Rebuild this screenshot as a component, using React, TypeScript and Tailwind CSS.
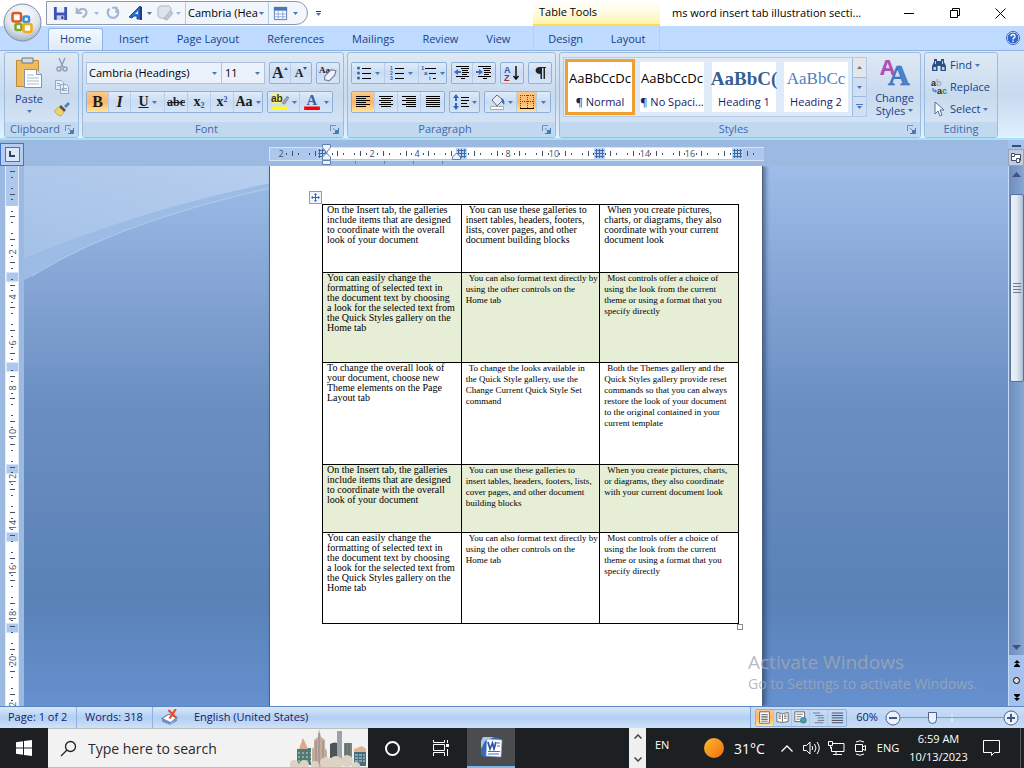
import { useState, type ReactNode } from 'react'

const tabs = ['Home', 'Insert', 'Page Layout', 'References', 'Mailings', 'Review', 'View']
const contextTabs = ['Design', 'Layout']

type Cell = string[]

interface DocRow {
  height: string
  shaded: boolean
  cells: [Cell, Cell, Cell]
}

const insertTab: Cell = ['On the Insert tab, the galleries', 'include items that are designed', 'to coordinate with the overall', 'look of your document']
const quickStyles: Cell = ['You can easily change the', 'formatting of selected text in', 'the document text by choosing', 'a look for the selected text from', 'the Quick Styles gallery on the', 'Home tab']
const formatDirect: Cell = ['You can also format text directly by', 'using the other controls on the', 'Home tab']
const mostControls: Cell = ['Most controls offer a choice of', 'using the look from the current', 'theme or using a format that you', 'specify directly']

const rows: DocRow[] = [
  {
    height: 'h-[68px]',
    shaded: false,
    cells: [
      insertTab,
      ['You can use these galleries to', 'insert tables, headers, footers,', 'lists, cover pages, and other', 'document building blocks'],
      ['When you create pictures,', 'charts, or diagrams, they also', 'coordinate with your current', 'document look'],
    ],
  },
  { height: 'h-[90px]', shaded: true, cells: [quickStyles, formatDirect, mostControls] },
  {
    height: 'h-[102px]',
    shaded: false,
    cells: [
      ['To change the overall look of', 'your document, choose new', 'Theme elements on the Page', 'Layout tab'],
      ['To change the looks available in', 'the Quick Style gallery, use the', 'Change Current Quick Style Set', 'command'],
      ['Both the Themes gallery and the', 'Quick Styles gallery provide reset', 'commands so that you can always', 'restore the look of your document', 'to the original contained in your', 'current template'],
    ],
  },
  {
    height: 'h-[68px]',
    shaded: true,
    cells: [
      insertTab,
      ['You can use these galleries to', 'insert tables, headers, footers, lists,', 'cover pages, and other document', 'building blocks'],
      ['When you create pictures, charts,', 'or diagrams, they also coordinate', 'with your current document look'],
    ],
  },
  { height: 'h-[91px]', shaded: false, cells: [quickStyles, formatDirect, mostControls] },
]

const Caret = ({ className = '' }: { className?: string }) => (
  <svg viewBox="0 0 5 3" className={`h-[3px] w-[5px] shrink-0 ${className}`} fill="#4a7ab5">
    <path d="M0 0h5L2.500 3z" />
  </svg>
)

function Icon({ size = 16, children }: { size?: number; children: ReactNode }) {
  return (
    <svg width={size} height={size} viewBox="0 0 16 16" fill="none" className="shrink-0">
      {children}
    </svg>
  )
}

// horizontal bars used by the list, alignment and spacing icons
const Lines = ({ bars, color = '#000' }: { bars: [number, number, number][]; color?: string }) => (
  <>
    {bars.map(([x, y, w]) => (
      <rect key={`${x}-${y}`} x={x} y={y} width={w} height="1" fill={color} />
    ))}
  </>
)

const alignBars: Record<string, [number, number, number][]> = {
  left: [[1, 2, 14], [1, 4, 10], [1, 6, 14], [1, 8, 10], [1, 10, 14], [1, 12, 10]],
  center: [[1, 2, 14], [3, 4, 10], [1, 6, 14], [3, 8, 10], [1, 10, 14], [3, 12, 10]],
  right: [[1, 2, 14], [5, 4, 10], [1, 6, 14], [5, 8, 10], [1, 10, 14], [5, 12, 10]],
  justify: [[1, 2, 14], [1, 4, 14], [1, 6, 14], [1, 8, 14], [1, 10, 14], [1, 12, 14]],
}

function Tool({ label, width = 'w-[23px]', active = false, caret = false, children }: { label: string; width?: string; active?: boolean; caret?: boolean; children: ReactNode }) {
  return (
    <button
      aria-label={label}
      className={`flex h-5 items-center justify-center gap-[3px] ${width} ${active ? 'bg-gradient-to-b from-[#fbc98c] via-[#fcb562] to-[#ffe59c]' : ''}`}
    >
      {children}
      {caret && <Caret />}
    </button>
  )
}

const ToolBox = ({ children }: { children: ReactNode }) => (
  <div className="flex h-[22px] divide-x divide-[#b7cde8] overflow-hidden rounded-[2px] border border-[#8fb0d8] bg-gradient-to-b from-[#dfebf9] via-[#c9dcf3] to-[#d6e6f8]">
    {children}
  </div>
)

function Group({ title, width, launcher = true, children }: { title: string; width: string; launcher?: boolean; children: ReactNode }) {
  return (
    <section className={`flex h-[86px] shrink-0 flex-col overflow-hidden rounded-[3px] border border-[#9bbbe0] bg-gradient-to-b from-[#dfe9f5] via-[#c9daee] to-[#d9e8f8] ${width}`}>
      <div className="flex-1">{children}</div>
      <div className="flex h-[15px] items-center bg-[#c1d8f1] text-[11px] text-[#3e6aaa]">
        <span className="flex-1 text-center">{title}</span>
        {launcher && (
          <button aria-label={`${title} options`} className="mr-1">
            <svg width="9" height="9" viewBox="0 0 9 9" fill="none" stroke="#6a8fc0">
              <path d="M.5 6V.5H6" />
              <path d="M3 3l3 3" />
              <path d="M8.500 3v5.500H3" stroke="#4e78b0" />
              <path d="M5 5h3v3H5z" fill="#4e78b0" stroke="none" />
            </svg>
          </button>
        )}
      </div>
    </section>
  )
}

function OfficeButton() {
  return (
    <button aria-label="Office Button" className="absolute left-[3px] top-[3px] z-10">
      <svg width="39" height="39" viewBox="0 0 39 39">
        <defs>
          <radialGradient id="orb" cx="50%" cy="30%" r="75%">
            <stop offset="0" stopColor="#ffffff" />
            <stop offset="0.600" stopColor="#dfe4ec" />
            <stop offset="1" stopColor="#9aa8bd" />
          </radialGradient>
        </defs>
        <circle cx="19.500" cy="19.500" r="18.500" fill="url(#orb)" stroke="#7d8ea8" />
        <g fill="#fff" strokeWidth="2.600">
          <rect x="9.500" y="10" width="8.500" height="8.500" rx="2" stroke="#e2571c" />
          <rect x="20.500" y="13.500" width="5.500" height="5.500" rx="1.500" stroke="#3b8fd8" />
          <rect x="12.500" y="21" width="6" height="6" rx="1.500" stroke="#79a928" />
          <rect x="20.500" y="21" width="8" height="8" rx="2" stroke="#f3ab1c" />
        </g>
      </svg>
    </button>
  )
}

function TitleBar() {
  return (
    <header className="flex h-[26px] shrink-0 items-center bg-white">
      <div className="ml-[46px] flex h-6 w-[262px] shrink-0 items-center rounded-r-full border border-[#8d99ab] bg-[#f3f6fa]">
        <button aria-label="Save" className="ml-[6px]">
          <Icon size={15}>
            <path d="M1 1h14v14H2l-1-1z" fill="#3f51b5" />
            <path d="M4 1h8v6H4z" fill="#e9efff" />
            <path d="M4 10h8v5H4z" fill="#c5cdf0" />
            <path d="M9 11h2v3H9z" fill="#26348c" />
          </Icon>
        </button>
        <button aria-label="Undo" className="ml-[7px] flex items-center gap-[5px]">
          <Icon size={14}>
            <path d="M2 2v6h6M3 7c4-6 11-4 10 1-.5 3-2.500 4-4.500 5" stroke="#a5b6d3" strokeWidth="2.500" />
          </Icon>
          <Caret className="opacity-50" />
        </button>
        <button aria-label="Repeat" className="ml-[7px]">
          <Icon size={14}>
            <path d="M4 3a6 6 0 1 0 8 0M12 8V2h-5" stroke="#a5b6d3" strokeWidth="2.500" />
          </Icon>
        </button>
        <button aria-label="WordArt" className="ml-2 flex items-center gap-[3px]">
          <Icon>
            <path d="M1 12L12 1v13h-3v-3H6l-2 2z" fill="#2c6fd0" stroke="#1b4a9c" />
            <path d="M7 9l3-3v3z" fill="#e6f0ff" />
            <path d="M12 1l2 1v13h-2z" fill="#173f85" />
          </Icon>
          <Caret />
        </button>
        <button aria-label="Change Shape" className="ml-[5px] flex items-center gap-[3px]">
          <Icon>
            <path d="M3 1h9l2 2v7l-3 3H3l-2-2V3z" fill="#dfe4ec" stroke="#aab5c6" />
            <path d="M7 14l6-8 3 2-6 7z" fill="#c3cad6" stroke="#aab5c6" />
          </Icon>
          <Caret className="opacity-50" />
        </button>
        <label className="ml-1 flex h-[22px] w-[84px] items-center border-x border-[#b4cae6] bg-[#f0f5fc] pr-1">
          <select aria-label="Quick font" className="min-w-0 flex-1 appearance-none overflow-hidden bg-transparent pl-[2px] text-[11px] text-black">
            <option>Cambria (Hea</option>
          </select>
          <Caret />
        </label>
        <button aria-label="Draw Table" className="ml-1 flex items-center gap-[5px]">
          <Icon size={15}>
            <path d="M1.500 1.500h13v13h-13z" fill="#fff" stroke="#4a76b8" />
            <path d="M1 1h14v4H1z" fill="#4a76b8" />
            <path d="M1 8.500h14M1 11.500h14M5.500 5v10M10.500 5v10" stroke="#8aa9d8" />
          </Icon>
          <Caret />
        </button>
      </div>
      <button aria-label="Customize Quick Access Toolbar" className="ml-2 flex flex-col gap-px">
        <span className="h-px w-[5px] bg-[#1d3f82]" />
        <Caret />
      </button>
      <div className="ml-[212px] flex h-full w-[127px] shrink-0 items-center border-b-2 border-[#fbe04b] bg-gradient-to-b from-white via-[#fffbe4] to-[#fff3a8] pl-[6px] text-[11px] text-black">
        Table Tools
      </div>
      <h1 className="min-w-0 flex-1 truncate pl-3 text-[11px] text-black">ms word insert tab illustration secti...</h1>
      <div className="flex h-full shrink-0 items-center text-black">
        <button aria-label="Minimize" className="flex w-[46px] justify-center">
          <svg width="10" height="10" stroke="#000"><path d="M0 5.500h10" /></svg>
        </button>
        <button aria-label="Restore" className="flex w-[45px] justify-center">
          <svg width="10" height="10" fill="none" stroke="#000"><path d="M.5 2.500h7v7h-7zM2.500 2.500v-2h7v7h-2" /></svg>
        </button>
        <button aria-label="Close" className="flex w-[47px] justify-center">
          <svg width="11" height="11" stroke="#000"><path d="M.5.5l10 10M10.500.5l-10 10" /></svg>
        </button>
      </div>
    </header>
  )
}

function TabBar({ active, onSelect }: { active: string; onSelect: (tab: string) => void }) {
  return (
    <nav className="flex h-6 shrink-0 items-end bg-[#bfdbff] pl-[48px] text-[11px] text-[#15428b]">
      {tabs.map(tab => (
        <button
          key={tab}
          onClick={() => onSelect(tab)}
          className={`h-[22px] shrink-0 ${tab === active ? 'mr-[2px] rounded-t-[3px] border border-b-0 border-[#8db2e3] bg-gradient-to-b from-[#f4f9ff] to-[#dfeaf7] px-[11px]' : 'px-[14px]'}`}
        >
          {tab}
        </button>
      ))}
      <div className="ml-[9px] flex h-full w-[127px] items-end border-x border-[#c9cfc0]">
        {contextTabs.map(tab => (
          <button key={tab} onClick={() => onSelect(tab)} className="h-[22px] flex-1">
            {tab}
          </button>
        ))}
      </div>
      <button aria-label="Help" className="ml-auto mr-1 self-center">
        <svg width="14" height="14" viewBox="0 0 14 14">
          <circle cx="7" cy="7" r="6" fill="#2f66d0" stroke="#fff" />
          <circle cx="7" cy="7" r="6.500" fill="none" stroke="#3563b5" />
          <path d="M5 5.500c0-3 4.200-2.500 4 0C8.900 7 7 6.800 7 8.500M7 9.600v1.500" fill="none" stroke="#fff" strokeWidth="1.400" />
        </svg>
      </button>
    </nav>
  )
}

function ClipboardGroup() {
  return (
    <Group title="Clipboard" width="w-[75px]">
      <div className="flex pl-[3px] pt-1">
        <button className="flex w-[42px] flex-col items-center text-[11px] text-[#15428b]">
          <svg width="28" height="32" viewBox="0 0 28 32">
            <path d="M1.500 3.500h22v26h-22z" fill="#f0bb5a" stroke="#b98a3a" />
            <path d="M7 1h11v5H7z" fill="#d6dbe2" stroke="#6e7681" />
            <path d="M9.500 12.500h12l5 5v13h-17z" fill="#fff" stroke="#7f93b4" />
            <path d="M21.500 12.500v5h5" fill="#dde7f5" stroke="#7f93b4" />
            <path d="M12 18h7M12 21h12M12 24h12M12 27h12" stroke="#a7b9d6" />
          </svg>
          <span className="mt-[2px]">Paste</span>
          <Caret className="mt-[2px]" />
        </button>
        <div className="ml-1 flex flex-col gap-[6px]">
          <button aria-label="Cut">
            <Icon>
              <path d="M5 1l4 9M11 1L7 10" stroke="#8d9fb8" strokeWidth="1.500" />
              <circle cx="5" cy="12" r="2" stroke="#8d9fb8" strokeWidth="1.500" />
              <circle cx="11" cy="12" r="2" stroke="#8d9fb8" strokeWidth="1.500" />
            </Icon>
          </button>
          <button aria-label="Copy">
            <Icon>
              <path d="M1.500 1.500h6l2 2v7h-8zM6.500 5.500h6l2 2v7h-8z" fill="#e6edf7" stroke="#93a9c8" />
              <path d="M8 9.500h5M8 11.500h5M3 4.500h3M3 6.500h3" stroke="#93a9c8" />
            </Icon>
          </button>
          <button aria-label="Format Painter">
            <Icon>
              <path d="M10 5l4-4 2 2-4 4z" fill="#5d7fc0" />
              <path d="M7 4l5 5-2 2-5-5z" fill="#5b5347" />
              <path d="M5 6l5 5-3 4c-2 0-5-2-7-5z" fill="#f4cf72" stroke="#b28b38" strokeWidth=".6" />
            </Icon>
          </button>
        </div>
      </div>
    </Group>
  )
}

function FontGroup() {
  return (
    <Group title="Font" width="w-[262px]">
      <div className="flex flex-col gap-[7px] px-[3px] pt-[9px]">
        <div className="flex items-center gap-1">
          <div className="flex h-[22px] text-[11px] text-black">
            <label className="flex w-[136px] items-center border border-[#abc1de] bg-[#eaf2fb] pr-1">
              <select aria-label="Font" className="min-w-0 flex-1 appearance-none bg-transparent pl-[2px]">
                <option>Cambria (Headings)</option>
              </select>
              <Caret />
            </label>
            <label className="flex w-[43px] items-center border border-l-0 border-[#abc1de] bg-[#eaf2fb] pr-1">
              <select aria-label="Font size" className="min-w-0 flex-1 appearance-none bg-transparent pl-[3px]">
                <option>11</option>
              </select>
              <Caret />
            </label>
          </div>
          <ToolBox>
            <Tool label="Grow Font" width="w-[21px]">
              <span className="font-['Liberation_Serif',serif] text-[16px] font-bold leading-none text-[#222]">A</span>
              <svg width="4" height="12" fill="#2b55a5" className="-ml-[3px]"><path d="M0 3h4L2 0z" /></svg>
            </Tool>
            <Tool label="Shrink Font" width="w-[21px]">
              <span className="font-['Liberation_Serif',serif] text-[12px] font-bold leading-none text-[#222]">A</span>
              <svg width="4" height="12" fill="#2b55a5" className="-ml-[3px]"><path d="M0 0h4L2 3z" /></svg>
            </Tool>
          </ToolBox>
          <ToolBox>
            <Tool label="Clear Formatting" width="w-[22px]">
              <Icon size={18}>
                <text x="0" y="8" fontSize="8" fontWeight="bold" fontFamily="Liberation Serif, serif" fill="#222">Aa</text>
                <path d="M5 11l6-6 4 1-1 4-5 5-4-1z" fill="#eef2f9" stroke="#6e83a8" />
              </Icon>
            </Tool>
          </ToolBox>
        </div>
        <div className="flex items-center gap-1 font-['Liberation_Serif',serif] text-[14px] leading-none text-[#1c1c1c]">
          <ToolBox>
            <Tool label="Bold" active width="w-[22px]"><b className="text-[16px]">B</b></Tool>
            <Tool label="Italic" width="w-[22px]"><i className="text-[16px] font-bold">I</i></Tool>
            <Tool label="Underline" caret width="w-[34px]"><u className="font-bold">U</u></Tool>
            <Tool label="Strikethrough"><s className="text-[12px] font-bold">abc</s></Tool>
            <Tool label="Subscript"><b>x<sub className="text-[8px] text-[#2b55a5]">2</sub></b></Tool>
            <Tool label="Superscript"><b>x<sup className="text-[8px] text-[#2b55a5]">2</sup></b></Tool>
            <Tool label="Change Case" caret width="w-[28px]"><b>Aa</b></Tool>
          </ToolBox>
          <ToolBox>
            <Tool label="Highlight" caret width="w-[32px]">
              <Icon size={18}>
                <path d="M1 1h9v8H1z" fill="#fff36b" />
                <text x="0" y="8" fontSize="9" fontWeight="bold" fontFamily="Liberation Sans, sans-serif" fill="#333">ab</text>
                <path d="M10 9l4-6 2 1-4 6z" fill="#9aa7bb" stroke="#5e6c84" strokeWidth=".5" />
                <path d="M1 12h14v3H1z" fill="#ff0" />
              </Icon>
            </Tool>
            <Tool label="Font Color" caret width="w-[32px]">
              <Icon size={18}>
                <text x="3" y="11" fontSize="13" fontWeight="bold" fontFamily="Liberation Serif, serif" fill="#2f5fa8">A</text>
                <path d="M1 12h14v3H1z" fill="#f00" />
              </Icon>
            </Tool>
          </ToolBox>
        </div>
      </div>
    </Group>
  )
}

function ParagraphGroup() {
  return (
    <Group title="Paragraph" width="w-[209px]">
      <div className="flex flex-col gap-[7px] px-[3px] pt-[9px]">
        <div className="flex gap-1">
          <ToolBox>
            <Tool label="Bullets" caret width="w-[33px]">
              <Icon>
                <circle cx="2.500" cy="3" r="1.500" fill="#3c5fa8" />
                <circle cx="2.500" cy="8" r="1.500" fill="#3c5fa8" />
                <circle cx="2.500" cy="13" r="1.500" fill="#3c5fa8" />
                <Lines bars={[[6, 3, 9], [6, 8, 9], [6, 13, 9]]} />
              </Icon>
            </Tool>
            <Tool label="Numbering" caret width="w-[34px]">
              <Icon>
                <g fontSize="5" fontWeight="bold" fill="#3c5fa8" fontFamily="Liberation Sans, sans-serif">
                  <text x="1" y="5">1</text>
                  <text x="1" y="10">2</text>
                  <text x="1" y="15">3</text>
                </g>
                <Lines bars={[[6, 3, 9], [6, 8, 9], [6, 13, 9]]} />
              </Icon>
            </Tool>
            <Tool label="Multilevel List" caret width="w-[28px]">
              <Icon>
                <g fontSize="6" fontWeight="bold" fill="#3c5fa8" fontFamily="Liberation Sans, sans-serif">
                  <text x="0" y="5">1</text>
                  <text x="3" y="10">a</text>
                  <text x="8" y="15">i</text>
                </g>
                <Lines bars={[[4, 3, 11], [8, 8, 7], [12, 13, 3]]} />
              </Icon>
            </Tool>
          </ToolBox>
          <ToolBox>
            <Tool label="Decrease Indent" width="w-[21px]">
              <Icon>
                <path d="M0 7l4-3v2h3v2H4v2z" fill="#3a6bc0" />
                <Lines bars={[[2, 1, 13], [7, 3, 8], [8, 5, 6], [8, 7, 7], [8, 9, 5], [2, 11, 13], [7, 13, 4]]} />
              </Icon>
            </Tool>
            <Tool label="Increase Indent" width="w-[22px]">
              <Icon>
                <path d="M7 7L3 4v2H0v2h3v2z" fill="#3a6bc0" />
                <Lines bars={[[2, 1, 13], [7, 3, 8], [8, 5, 6], [8, 7, 7], [8, 9, 5], [2, 11, 13], [7, 13, 4]]} />
              </Icon>
            </Tool>
          </ToolBox>
          <ToolBox>
            <Tool label="Sort" width="w-[22px]">
              <Icon>
                <text x="0" y="7.500" fontSize="9" fontWeight="bold" fontFamily="Liberation Sans, sans-serif" fill="#2b5bb0">A</text>
                <text x="0" y="15.500" fontSize="9" fontWeight="bold" fontFamily="Liberation Sans, sans-serif" fill="#a33232">Z</text>
                <path d="M12 1v12M9.500 11l2.500 3 2.500-3" stroke="#111" strokeWidth="1.500" />
              </Icon>
            </Tool>
          </ToolBox>
          <ToolBox>
            <Tool label="Show Paragraph Marks" width="w-[22px]">
              <Icon>
                <path d="M8 2h6v1h-1v11h-1.500V3H10v11H8.500V9C2 9 2 2 8 2z" fill="#222" />
              </Icon>
            </Tool>
          </ToolBox>
        </div>
        <div className="flex gap-1">
          <ToolBox>
            {Object.entries(alignBars).map(([side, bars]) => (
              <Tool key={side} label={`Align ${side}`} active={side === 'left'}>
                <Icon><Lines bars={bars} /></Icon>
              </Tool>
            ))}
          </ToolBox>
          <ToolBox>
            <Tool label="Line Spacing" caret width="w-[29px]">
              <Icon>
                <path d="M3 0l3 4H4v8h2l-3 4-3-4h2V4H0z" fill="#2f66c4" />
                <path d="M0 7h6v2H0z" fill="#cfe0f5" />
                <Lines bars={[[8, 3, 8], [8, 6, 8], [8, 9, 6], [8, 12, 8]]} />
              </Icon>
            </Tool>
          </ToolBox>
          <ToolBox>
            <Tool label="Shading" caret width="w-[32px]">
              <Icon>
                <path d="M3 6l5-5 6 5-6 6z" fill="#e6ecf6" stroke="#5d6f8f" />
                <path d="M12 4c3 1 4 4 3 7l-2-3z" fill="#2f66b8" />
                <path d="M1.500 12.500h13v3h-13z" fill="#fff" stroke="#aaa" />
              </Icon>
            </Tool>
            <Tool label="Borders" active width="w-[20px]">
              <Icon>
                <path d="M1.500 1v13M8.500 1v13M14.500 1v13M1 1.500h14M1 7.500h14" stroke="#6b4a1c" strokeDasharray="1 1" />
                <path d="M1 14.500h14" stroke="#000" />
              </Icon>
            </Tool>
            <Tool label="Border options" width="w-[13px]"><Caret /></Tool>
          </ToolBox>
        </div>
      </div>
    </Group>
  )
}

const styleCards = [
  { name: '¶ Normal', sample: 'AaBbCcDc', look: "font-['Open_Sans',sans-serif] text-[13px] text-black" },
  { name: '¶ No Spaci...', sample: 'AaBbCcDc', look: "font-['Open_Sans',sans-serif] text-[13px] text-black" },
  { name: 'Heading 1', sample: 'AaBbC(', look: "font-['Liberation_Serif',serif] text-[19px] font-bold text-[#365f91]" },
  { name: 'Heading 2', sample: 'AaBbCc', look: "font-['Liberation_Serif',serif] text-[17px] text-[#4f81bd]" },
]

function StylesGroup() {
  const [style, setStyle] = useState('¶ Normal')
  return (
    <Group title="Styles" width="w-[362px]">
      <div className="flex gap-[2px] pl-[3px] pt-1">
        <div className="flex h-[60px] border border-[#b3cbe9] bg-[#dfebf9]">
          {styleCards.map(card => (
            <button
              key={card.name}
              onClick={() => setStyle(card.name)}
              className={`m-px flex w-[70px] flex-col items-center justify-between border-[3px] bg-white py-[2px] text-[11px] text-[#15216b] ${style === card.name ? 'border-[#f0a030]' : 'border-[#dfebf9]'}`}
            >
              <span className={`flex h-[30px] items-center whitespace-nowrap ${card.look}`}>{card.sample}</span>
              <span className="whitespace-nowrap">{card.name}</span>
            </button>
          ))}
          <div className="flex w-[14px] flex-col divide-y divide-[#9dbbe0] border-l border-[#9dbbe0] bg-[#cfe0f5]">
            <button aria-label="Previous styles" className="flex flex-1 items-center justify-center bg-[#e4e6ea]"><Caret className="rotate-180 grayscale" /></button>
            <button aria-label="Next styles" className="flex flex-1 items-center justify-center"><Caret /></button>
            <button aria-label="More styles" className="flex flex-1 flex-col items-center justify-center gap-px">
              <span className="h-px w-[7px] bg-[#4a7ab5]" />
              <Caret />
            </button>
          </div>
        </div>
        <button className="flex flex-1 flex-col items-center text-[11px] leading-[13px] text-[#15428b]">
          <svg width="30" height="30" viewBox="0 0 30 30" className="overflow-visible">
            <text x="0" y="18" fontSize="22" fontWeight="bold" fontFamily="Open Sans, sans-serif" fill="#b04fb8">A</text>
            <text x="8" y="28" fontSize="30" fontWeight="bold" fontFamily="Liberation Serif, serif" fill="#4a84cf" stroke="#2b62ae" strokeWidth=".6">A</text>
          </svg>
          <span className="mt-1">Change</span>
          <span className="flex items-center gap-[3px]">Styles <Caret /></span>
        </button>
      </div>
    </Group>
  )
}

function EditingGroup() {
  return (
    <Group title="Editing" width="w-[74px]" launcher={false}>
      <div className="flex flex-col items-start pl-[6px] pt-px text-[11px] text-[#15428b]">
        <button className="flex h-[22px] items-center gap-[3px]">
          <Icon>
            <path d="M3 2h3v2h4V2h3v3l2 4v5H9.500V9h-3v5H1V9l2-4z" fill="#2d4f86" />
            <path d="M2.500 10h2.500v3H2.500zM11 10h2.500v3H11zM4 4h1v3H4zM11 4h1v3h-1z" fill="#bcd0ec" />
          </Icon>
          Find <Caret />
        </button>
        <button className="flex h-[22px] items-center gap-[3px]">
          <Icon>
            <g fontSize="9" fontWeight="bold" fontFamily="Liberation Sans, sans-serif">
              <text x="0" y="7" fill="#222">a</text>
              <text x="5" y="7" fill="#9fa9b8">b</text>
              <text x="6" y="15" fill="#222">a</text>
              <text x="11" y="15" fill="#1c9a35">c</text>
            </g>
            <path d="M2 9v3h3M4 10.500l1.500 1.500L4 13.500" stroke="#3265b8" />
          </Icon>
          Replace
        </button>
        <button className="flex h-[22px] items-center gap-[3px]">
          <Icon>
            <path d="M4 1v12l3-3 2 5 2-1-2-5h4z" fill="#fff" stroke="#55709b" />
          </Icon>
          Select <Caret />
        </button>
      </div>
    </Group>
  )
}

// one unit on the ruler is 22.75px, only even numbers are written out
const UNIT = 22.75

function rulerMarks(from: number, to: number, origin: number) {
  const marks: { at: number; kind: 'short' | 'long' | 'label'; value: number }[] = []
  for (let q = from * 4; q <= to * 4; q++) {
    const at = Math.round(origin + (q / 4) * UNIT)
    if (q % 4 === 0) {
      if ((q / 4) % 2 === 0 && q !== 0) marks.push({ at, kind: 'label', value: Math.abs(q / 4) })
    } else {
      marks.push({ at, kind: q % 2 === 0 ? 'long' : 'short', value: 0 })
    }
  }
  return marks
}

function HorizontalRuler() {
  const hidden = [6, 12, 18]
  return (
    <svg width="495" height="26" viewBox="0 0 495 26" shapeRendering="crispEdges">
      <rect x="0" y="7" width="495" height="13" fill="#adc8ec" stroke="#d5e4f8" />
      <rect x="57" y="8" width="412" height="11" fill="#fff" />
      {rulerMarks(-2, 18.750, 57).map(m =>
        m.kind === 'label' ? (
          !hidden.includes(m.value) && (
            <text key={m.at} x={m.at} y="17" fontSize="9" textAnchor="middle" fontFamily="Open Sans, sans-serif" fill="#44506a">{m.value}</text>
          )
        ) : (
          <rect key={m.at} x={m.at} y={m.kind === 'long' ? 11 : 13} width="1" height={m.kind === 'long' ? 5 : 2} fill="#44506a" />
        )
      )}
      {[53, 192, 330, 468].map(x => (
        <g key={x}>
          <rect x={x - 5} y="8" width="11" height="11" fill="#bcd3f2" />
          <path d={`M${x - 2.500} 9v9M${x + 0.500} 9v9M${x + 3.500} 9v9M${x - 4} 10.500h9M${x - 4} 13.500h9M${x - 4} 16.500h9`} stroke="#3f68a8" />
        </g>
      ))}
      <g fill="#eef3fa" stroke="#5b80b5" shapeRendering="auto">
        <path d="M53.500 4.500h8v3l-4 5-4-5zM57.500 13l4 4v3h-8v-3zM53.500 20.500h8v4h-8z" />
        <path d="M187.500 13l4 4v2.500h-8V17z" />
      </g>
      <path d="M86.500 21v3M115.500 21v3M144.500 21v3M173.500 21v3" stroke="#77808f" />
    </svg>
  )
}

function VerticalRuler() {
  return (
    <svg width="14" height="540" viewBox="0 0 14 540" shapeRendering="crispEdges">
      <rect x="0" y="0" width="14" height="540" fill="#dfeafa" />
      <rect x="1" y="0" width="12" height="540" fill="#fff" />
      <rect x="1" y="0" width="12" height="40" fill="#adc8ec" />
      {[106, 196, 298, 366, 457].map(y => (
        <rect key={y} x="1" y={y} width="12" height="9" fill="#adc8ec" stroke="#d5e4f8" />
      ))}
      {rulerMarks(-1.500, 22, 39).map(m =>
        m.kind === 'label' ? (
          <text key={m.at} transform={`translate(11 ${m.at + 1}) rotate(-90)`} fontSize="9" textAnchor="middle" fontFamily="Open Sans, sans-serif" fill="#44506a">{m.value}</text>
        ) : (
          <rect key={m.at} x={m.kind === 'long' ? 5 : 6} y={m.at} width={m.kind === 'long' ? 5 : 2} height="1" fill="#44506a" />
        )
      )}
    </svg>
  )
}

function DocumentPage() {
  return (
    <main className="relative z-10 w-[494px] border-x border-[#4c5f7f] bg-white pl-[52px] pt-[38px] text-black shadow-[3px_0_4px_rgba(30,50,90,0.5)]">
      <div className="relative w-[417px]">
        <button aria-label="Move table" className="absolute -left-[13px] -top-[13px] flex size-[13px] items-center justify-center border border-[#9c9c9c] bg-[#f3f3f3]">
          <svg width="9" height="9" viewBox="0 0 9 9" fill="#2b5fc4">
            <path d="M4 1h1v7H4zM1 4h7v1H1zM4.500 0L6 2H3zM4.500 9L3 7h3zM0 4.500L2 3v3zM9 4.500L7 6V3z" />
          </svg>
        </button>
        <table className="w-full table-fixed border-collapse">
          <tbody>
            {rows.map((row, r) => (
              <tr key={r} className={`${row.height} ${row.shaded ? 'bg-[#e6eed5]' : ''}`}>
                {row.cells.map((lines, c) => {
                  const large = c === 0 || r === 0
                  return (
                    <td
                      key={c}
                      className={`whitespace-nowrap border border-black py-0 pl-1 pr-0 align-top font-['Liberation_Serif',serif] ${large ? 'text-[10px] leading-[10px]' : 'text-[9px] leading-[11px]'}`}
                    >
                      {lines.map((line, i) => (
                        <div key={line} className={c > 0 && i === 0 ? 'pl-[3px]' : ''}>{line}</div>
                      ))}
                    </td>
                  )
                })}
              </tr>
            ))}
          </tbody>
        </table>
        <span className="absolute -bottom-[6px] -right-[4px] size-[6px] border border-[#8a8a8a] bg-white" />
      </div>
    </main>
  )
}

function ScrollBar() {
  return (
    <div className="flex w-4 shrink-0 flex-col items-center border-l border-[#c7dbf7] bg-[#a4c2f0]">
      <div className="flex w-full flex-1 flex-col items-center bg-gradient-to-r from-[#6d8fc0] to-[#86a6d3]">
        <button aria-label="Scroll up" className="flex h-7 items-center pb-3">
          <svg width="9" height="5" fill="#44527c"><path d="M0 5h9L4.500 0z" /></svg>
        </button>
        <div className="flex h-[188px] w-[14px] flex-col items-center justify-center gap-[2px] rounded-[2px] border border-[#56719f] bg-gradient-to-r from-[#eef2f8] via-[#dfe7f1] to-[#a9bdd6]">
          {[0, 1, 2, 3].map(i => <span key={i} className="h-px w-2 bg-[#6f7d95]" />)}
        </div>
        <button aria-label="Scroll down" className="mt-auto flex h-4 items-center">
          <svg width="9" height="5" fill="#44527c"><path d="M0 0h9L4.500 5z" /></svg>
        </button>
      </div>
      <div className="flex h-[51px] flex-col items-center justify-around">
        <button aria-label="Previous page"><svg width="6" height="7"><path d="M3 0l3 3H0zM3 3l3 3H0zM0 6h6v1H0z" /></svg></button>
        <button aria-label="Browse object" className="size-[7px] rounded-full border border-black bg-[#ddd]" />
        <button aria-label="Next page"><svg width="6" height="7"><path d="M0 0h6v1H0zM0 1h6L3 4zM0 4h6L3 7z" /></svg></button>
      </div>
    </div>
  )
}

function Workspace() {
  return (
    <div className="relative flex flex-1 flex-col">
      <div className="flex h-[26px] shrink-0 bg-[#9bb9e1]">
        <div className="flex w-6 shrink-0 items-center justify-center">
          <button aria-label="Tab selector" className="mt-[2px] flex h-[23px] w-full items-center justify-center border border-[#4472c4] bg-[#b5cdf0]">
            <span className="flex size-[15px] items-center justify-center border border-[#4472c4] bg-[#dce8f8]">
              <span className="size-[6px] border-b-2 border-l-2 border-[#2a4168]" />
            </span>
          </button>
        </div>
        <div className="flex flex-1 justify-center"><HorizontalRuler /></div>
        <div className="flex w-4 flex-col items-center justify-end bg-[#a4c2f0]">
          <span className="mb-[2px] h-[2px] w-[9px] bg-[#3c4c6e]" />
          <button aria-label="View ruler" className="flex h-[17px] w-full items-center justify-center border border-[#96a5bf] bg-[#c3cbd9]">
            <svg width="12" height="12" viewBox="0 0 12 12" fill="#fff" stroke="#3c4c6e">
              <path d="M1.500 4.500v-3h3v1h6v6h-1v2h-3v-2h-5z" />
              <path d="M1.500 4.500h3v-2M6.500 8.500v-2h3v2" />
            </svg>
          </button>
        </div>
      </div>
      <div className="flex flex-1">
        <div className="w-6 shrink-0 overflow-hidden bg-[#9bb9e1] pl-[5px]"><VerticalRuler /></div>
        <div className="relative flex flex-1 justify-center overflow-hidden bg-[linear-gradient(to_bottom,#9ebee9_0%,#84a5d5_22%,#6a8ec1_45%,#5a82b7_80%,#6690cf_100%)]">
          <svg className="absolute left-0 top-0 h-[120px] w-[320px]" viewBox="0 0 320 120" preserveAspectRatio="none">
            <defs>
              <linearGradient id="swoosh" x1="0" y1="1" x2="1" y2="0">
                <stop offset="0" stopColor="#a3c1e6" />
                <stop offset="1" stopColor="#bad0f0" />
              </linearGradient>
            </defs>
            <path d="M0 0h320v4Q150 30 0 93z" fill="url(#swoosh)" />
            <path d="M0 93Q150 30 320 4v3Q110 45 8 110L0 114z" fill="#9dbce5" />
            <path d="M8 110Q110 45 320 7" fill="none" stroke="#b3cbec" />
          </svg>
          <DocumentPage />
        </div>
        <ScrollBar />
      </div>
      <div className="pointer-events-none absolute bottom-3 right-[16px] z-20 w-[260px] whitespace-nowrap text-[#a3a9b3]/80">
        <p className="text-[19px] leading-6">Activate Windows</p>
        <p className="text-[14px] leading-5">Go to Settings to activate Windows.</p>
      </div>
    </div>
  )
}

function StatusBar() {
  const [zoom, setZoom] = useState(29)
  return (
    <footer className="flex h-[22px] shrink-0 items-center border-t border-[#5b87c0] bg-gradient-to-b from-[#dbe8fa] via-[#b2cff3] to-[#cfe1f8] text-[11px] text-[#15216b]">
      <div className="flex h-full items-center divide-x divide-[#8fb2e0]">
        <button className="h-full w-[77px] pl-2 text-left">Page: 1 of 2</button>
        <button className="h-full w-[76px] pl-2 text-left">Words: 318</button>
        <button className="flex h-full w-[166px] items-center gap-4 pl-2">
          <Icon size={17}>
            <path d="M1 9l6-4 8 3-6 5z" fill="#fff" stroke="#6b83ab" />
            <path d="M1 9v3l8 3v-2zM9 15l6-4V8" fill="#6d90cc" />
            <path d="M7 1l7 7M14 0L8 9" stroke="#ee4a25" strokeWidth="2" />
          </Icon>
          English (United States)
        </button>
      </div>
      <div className="ml-auto flex h-full items-center border-l border-[#7fa3d6] bg-[#c2d8f5]/60 pl-1">
        <div className="flex h-[18px] divide-x divide-[#b3c8e6] rounded-[2px] border border-[#8fb0d8]">
          <Tool label="Print Layout" active width="h-full w-[18px]">
            <Icon size={13}><path d="M2 1h12v14H2z" fill="#fff" stroke="#555" /><Lines color="#555" bars={[[4, 4, 8], [4, 6, 8], [4, 8, 8], [4, 10, 8], [4, 12, 8]]} /></Icon>
          </Tool>
          <Tool label="Full Screen Reading" width="h-full w-[18px]">
            <Icon size={13}><path d="M1 2l6 1 1 1 1-1 6-1v11l-6 1-1 1-1-1-6-1z" fill="#fff" stroke="#555" /><path d="M8 4v10M3 5h3M3 7h3M3 9h3M10 5h3M10 7h3M10 9h3" stroke="#555" /></Icon>
          </Tool>
          <Tool label="Web Layout" width="h-full w-[18px]">
            <Icon size={13}><path d="M1 1h12v12H1z" fill="#fff" stroke="#555" /><path d="M3 4h8M3 7h6M3 10h4" stroke="#555" /><circle cx="11.500" cy="11.500" r="4" fill="#3a86c8" /><path d="M9 10l3-1 2 2-3 4z" fill="#59b05a" /></Icon>
          </Tool>
          <Tool label="Outline" width="h-full w-[18px]">
            <Icon size={13}><Lines color="#667" bars={[[1, 2, 9], [4, 5, 10], [7, 8, 8], [7, 11, 8], [3, 14, 11]]} /></Icon>
          </Tool>
          <Tool label="Draft" width="h-full w-[18px]">
            <Icon size={13}><Lines color="#334" bars={[[1, 2, 14], [1, 5, 14], [1, 8, 14], [1, 11, 14], [1, 14, 14]]} /></Icon>
          </Tool>
        </div>
        <button className="ml-2 w-6">60%</button>
        <button aria-label="Zoom out" className="ml-[6px]">
          <svg width="16" height="16" viewBox="0 0 16 16"><circle cx="8" cy="8" r="7" fill="#eaf1fb" stroke="#4b628c" /><path d="M4 7h8v2H4z" fill="#44587f" /></svg>
        </button>
        <input
          type="range"
          aria-label="Zoom"
          value={zoom}
          onChange={e => setZoom(Number(e.target.value))}
          className="h-4 w-[102px] appearance-none bg-transparent bg-[linear-gradient(#7f9dc9,#7f9dc9),linear-gradient(#dbe8fa,#dbe8fa)] bg-[length:100%_1px,2px_8px] bg-center bg-no-repeat [&::-webkit-slider-thumb]:h-3 [&::-webkit-slider-thumb]:w-[9px] [&::-webkit-slider-thumb]:appearance-none [&::-webkit-slider-thumb]:rounded-b-full [&::-webkit-slider-thumb]:border [&::-webkit-slider-thumb]:border-[#4b628c] [&::-webkit-slider-thumb]:bg-[#e8f0fb]"
        />
        <button aria-label="Zoom in" className="mr-[5px]">
          <svg width="16" height="16" viewBox="0 0 16 16"><circle cx="8" cy="8" r="7" fill="#eaf1fb" stroke="#4b628c" /><path d="M4 7h3V4h2v3h3v2H9v3H7V9H4z" fill="#44587f" /></svg>
        </button>
      </div>
    </footer>
  )
}

function Taskbar() {
  return (
    <div className="flex h-10 shrink-0 items-center bg-[#1c2023] text-white">
      <button aria-label="Start" className="flex w-12 justify-center">
        <svg width="16" height="16" viewBox="0 0 16 16" fill="#fff"><path d="M0 2.200l7-1v6.300H0zM8 1.100L16 0v7.500H8zM0 8.500h7v6.300l-7-1zM8 8.500h8V16l-8-1.100z" /></svg>
      </button>
      <label className="flex h-full w-[320px] items-center border-y border-[#bdbdbd] bg-[#f2f2f2] pl-3">
        <svg width="17" height="17" viewBox="0 0 17 17" fill="none" stroke="#222" strokeWidth="1.300">
          <circle cx="10.500" cy="6.500" r="5" />
          <path d="M7 10l-6 6" />
        </svg>
        <input aria-label="Search" placeholder="Type here to search" className="ml-[11px] w-[200px] bg-transparent text-[14px] outline-none placeholder:text-[#2b2b2b]" />
        <svg width="78" height="38" viewBox="0 0 78 38" className="ml-auto">
          <path d="M13 10l4 9h4v17H7V20h3z" fill="#527a74" />
          <path d="M13 9l5 11H9z" fill="#dca98a" />
          <path d="M8 24h13M8 28h13M8 32h13" stroke="#c8d6c8" strokeDasharray="2 2" />
          <path d="M29 0l2 8 4 3v8l2 3v16H22V20l2-2v-7l4-3z" fill="#c4ad9f" />
          <path d="M29 4v32M26 12v24M33 12v24" stroke="#94868a" />
          <path d="M40 15q5-3 9 0v14h-9z" fill="#4d5358" />
          <path d="M47 2h5v30h-5z" fill="#9aa3ab" />
          <path d="M54 14h8v22h-8z" fill="#7a857f" />
          <path d="M56 14v22M59 14v22" stroke="#56615d" />
          <path d="M64 20l8-3 4 3v17H64z" fill="#e2b292" />
          <path d="M64 23h12v14H64z" fill="#456d7c" />
          <path d="M65 26h10M65 29h10M65 32h10" stroke="#cfdcd8" strokeDasharray="3 1" />
          <g fill="#ddd2c4">
            <circle cx="4" cy="36" r="5" /><circle cx="14" cy="36" r="5" /><circle cx="25" cy="36" r="4" />
            <circle cx="36" cy="34" r="6" /><circle cx="46" cy="34" r="7" /><circle cx="57" cy="32" r="6" /><circle cx="66" cy="37" r="4" />
          </g>
        </svg>
      </label>
      <button aria-label="Cortana" className="flex w-12 justify-center"><span className="size-[15px] rounded-full border-2 border-white" /></button>
      <button aria-label="Task View" className="flex w-[51px] justify-center">
        <svg width="17" height="16" viewBox="0 0 17 16" fill="none" stroke="#fff">
          <path d="M.5 0v2.500h11V0M.5 4.500h11v6H.5zM.5 16v-3.500h11V16M14.500 0v3M14.500 9v7" />
          <path d="M13 4h3v3h-3z" fill="#fff" stroke="none" />
        </svg>
      </button>
      <button aria-label="Microsoft Word" className="flex h-full w-12 items-center justify-center border-b-2 border-[#76b9ed] bg-[#4a4c50]">
        <svg width="24" height="24" viewBox="0 0 24 24">
          <path d="M4 2h12l6 2v16l-16 2-4-2V6z" fill="#3967b5" />
          <path d="M4 2h11l-9 4-4 8V6z" fill="#a9c6ec" />
          <path d="M8 4l15 1-1 17-15-1z" fill="#fff" stroke="#8ba3cc" strokeWidth=".6" />
          <path d="M9 7l2 7 2.500-6L15 14l2-7" fill="none" stroke="#2a55a5" strokeWidth="1.700" />
          <path d="M18 8h3M18 11h3M9 16.500h12M9 19h11" stroke="#4a70b8" strokeWidth="1.200" />
        </svg>
      </button>
      <div className="ml-auto flex h-full w-[17px] flex-col items-center justify-between bg-[#f0f0f0] py-[6px]">
        <svg width="8" height="5" fill="none" stroke="#444" strokeWidth="1.500"><path d="M.5 4.500L4 1l3.500 3.500" /></svg>
        <svg width="8" height="5" fill="none" stroke="#444" strokeWidth="1.500"><path d="M.5.5L4 4 7.500.5" /></svg>
      </div>
      <span className="w-[58px] pb-[5px] pl-[9px] text-[11px]">EN</span>
      <div className="flex items-center text-[12px]">
        <button className="flex w-[77px] items-center gap-[10px] text-[14px]">
          <span className="size-5 rounded-full bg-gradient-to-br from-[#f9bb2d] to-[#f2690d]" />
          31°C
        </button>
        <button aria-label="Show hidden icons" className="w-[22px]">
          <svg width="12" height="7" fill="none" stroke="#fff" strokeWidth="1.300"><path d="M.5 6.500L6 1l5.500 5.500" /></svg>
        </button>
        <button aria-label="Volume" className="w-[25px]">
          <svg width="17" height="14" viewBox="0 0 17 14" fill="none" stroke="#fff"><path d="M.5 4.500h3L7 1v12L3.500 9.500h-3zM9 5q1.500 2 0 4M11.500 3q3 4 0 8M14 1q4.500 6 0 12" /></svg>
        </button>
        <button aria-label="Network" className="w-[26px]">
          <svg width="17" height="14" viewBox="0 0 17 14" fill="none" stroke="#fff"><path d="M5 2.500h11v8H3.500V6M8 10.500v3M5 13.500h9M.5.5h4v4h-4zM2.500 4.500v3" /></svg>
        </button>
        <button aria-label="Camera" className="w-5">
          <svg width="13" height="16" viewBox="0 0 13 16" fill="none" stroke="#fff"><path d="M1.500 4.500h7v7h-7zM8.500 7l3-1.500v5L8.500 9M2 2q4-2.500 8 0M2 14q4 2.500 8 0" /></svg>
        </button>
        <button className="w-[28px] text-[11px]">ENG</button>
        <button className="w-[73px] text-center text-[11px] leading-[18px]">
          6:59 AM
          <br />
          10/13/2023
        </button>
        <button aria-label="Notifications" className="ml-2 mr-5">
          <svg width="17" height="16" viewBox="0 0 17 16" fill="none" stroke="#fff"><path d="M.5.5h16v12h-5l-3 3v-3h-8z" /></svg>
        </button>
        <span className="mr-[3px] h-10 w-px bg-[#5a5d60]" />
      </div>
    </div>
  )
}

export default function App() {
  const [tab, setTab] = useState('Home')

  return (
    <div className="relative flex min-h-screen flex-col overflow-hidden font-['Open_Sans',sans-serif]">
      <OfficeButton />
      <TitleBar />
      <TabBar active={tab} onSelect={setTab} />
      <div className="flex h-[90px] shrink-0 gap-[3px] border-b-2 border-t border-b-[#a9e2f5] border-t-[#8db2e3] bg-gradient-to-b from-[#dbe7f5] via-[#c7daef] to-[#e0f1ff] pl-1 pt-px">
        <ClipboardGroup />
        <FontGroup />
        <ParagraphGroup />
        <StylesGroup />
        <EditingGroup />
      </div>
      <Workspace />
      <StatusBar />
      <Taskbar />
    </div>
  )
}
